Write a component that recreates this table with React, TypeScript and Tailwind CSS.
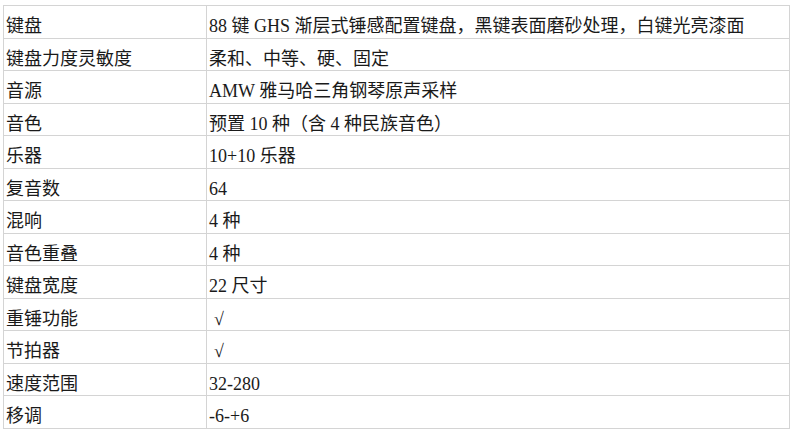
const ROWS: [string, string][] = [
  ["键盘", "88 键 GHS 渐层式锤感配置键盘，黑键表面磨砂处理，白键光亮漆面"],
  ["键盘力度灵敏度", "柔和、中等、硬、固定"],
  ["音源", "AMW 雅马哈三角钢琴原声采样"],
  ["音色", "预置 10 种（含 4 种民族音色）"],
  ["乐器", "10+10 乐器"],
  ["复音数", "64"],
  ["混响", "4 种"],
  ["音色重叠", "4 种"],
  ["键盘宽度", "22 尺寸"],
  ["重锤功能", "√"],
  ["节拍器", "√"],
  ["速度范围", "32-280"],
  ["移调", "-6-+6"],
];

export default function App() {
  return (
    <div className="h-[431px] w-[795px] bg-white pl-[3px] pt-[5px] text-[#1a1a1a]">
      <table
        className="border-collapse text-[18px] leading-none"
        style={{ fontFamily: '"Liberation Serif", "Noto Sans CJK SC", serif' }}
      >
        <tbody>
          {ROWS.map(([k, v]) => (
            <tr key={k} className="h-[32.5px]">
              <td className="w-[203px] border border-[#d4d4d4] pl-[2px] pt-[9px] align-middle whitespace-nowrap">
                {k}
              </td>
              <td className="w-[583px] border border-[#d4d4d4] pl-[2px] pt-[9px] align-middle whitespace-nowrap">
                {v === "√" ? <span className="pl-[5px]">{v}</span> : v}
              </td>
            </tr>
          ))}
        </tbody>
      </table>
    </div>
  );
}
